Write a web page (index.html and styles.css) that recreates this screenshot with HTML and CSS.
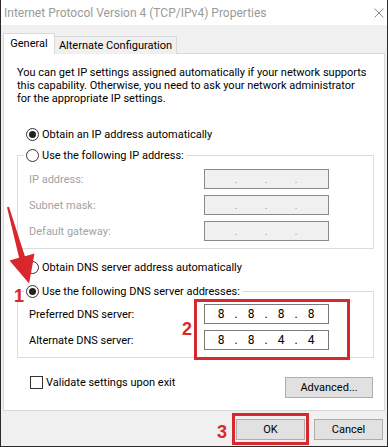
FILE: index.html
```html
<!DOCTYPE html>
<html>
<head>
<meta charset="utf-8">
<link rel="stylesheet" href="styles.css">
</head>
<body>
<div class="window">
  <div class="titlebar">
    <span class="title">Internet Protocol Version 4 (TCP/IPv4) Properties</span>
    <svg class="close" width="10" height="10" viewBox="0 0 10 10"><path d="M0.5 0.5L9.5 9.5M9.5 0.5L0.5 9.5" stroke="#8c8c8c" stroke-width="1" fill="none"/></svg>
  </div>
  <div class="client">
    <div class="tabs">
      <div class="tab active">General</div>
      <div class="tab">Alternate Configuration</div>
    </div>
    <div class="panel">
      <p class="desc">You can get IP settings assigned automatically if your network supports<br>this capability. Otherwise, you need to ask your network administrator<br>for the appropriate IP settings.</p>

      <div class="row radio-row first-radio"><span class="radio checked"></span><span>Obtain an IP address automatically</span></div>
      <div class="group group-ip">
        <div class="legend"><span class="radio"></span><span>Use the following IP address:</span></div>
        <div class="fields">
          <div class="field disabled"><span class="lbl">IP address:</span><div class="ip off"><span class="seg"></span><span class="dot">.</span><span class="seg"></span><span class="dot">.</span><span class="seg"></span><span class="dot">.</span><span class="seg"></span></div></div>
          <div class="field disabled"><span class="lbl">Subnet mask:</span><div class="ip off"><span class="seg"></span><span class="dot">.</span><span class="seg"></span><span class="dot">.</span><span class="seg"></span><span class="dot">.</span><span class="seg"></span></div></div>
          <div class="field disabled"><span class="lbl">Default gateway:</span><div class="ip off"><span class="seg"></span><span class="dot">.</span><span class="seg"></span><span class="dot">.</span><span class="seg"></span><span class="dot">.</span><span class="seg"></span></div></div>
        </div>
      </div>

      <div class="row radio-row dns-radio"><span class="radio"></span><span>Obtain DNS server address automatically</span></div>
      <div class="group group-dns">
        <div class="legend"><span class="radio checked"></span><span>Use the following DNS server addresses:</span></div>
        <div class="fields fields-dns">
          <div class="field"><span class="lbl">Preferred DNS server:</span><div class="ip"><span class="seg">8</span><span class="dot">.</span><span class="seg">8</span><span class="dot">.</span><span class="seg">8</span><span class="dot">.</span><span class="seg">8</span></div></div>
          <div class="field"><span class="lbl">Alternate DNS server:</span><div class="ip"><span class="seg">8</span><span class="dot">.</span><span class="seg">8</span><span class="dot">.</span><span class="seg">4</span><span class="dot">.</span><span class="seg">4</span></div></div>
        </div>
      </div>

      <div class="bottom-row">
        <div class="row check-row"><span class="check"></span><span>Validate settings upon exit</span></div>
        <button class="btn adv">Advanced...</button>
      </div>
    </div>
    <div class="footer">
      <button class="btn">OK</button>
      <button class="btn">Cancel</button>
    </div>
  </div>

  <svg class="arrow" width="388" height="447" viewBox="0 0 388 447">
    <polygon points="7,207.3 9,206.7 24.9,256.2 34.5,253.6 29.1,283.6 9.5,260.4 19.1,257.8" fill="#d9272e"/>
  </svg>
  <div class="mark box-dns"></div>
  <div class="mark box-ok"></div>
  <span class="num n1">1</span>
  <span class="num n2">2</span>
  <span class="num n3">3</span>
</div>
</body>
</html>
```
FILE: styles.css
```css
body {
  margin: 0;
  font-family: Roboto, "Noto Sans", sans-serif;
  font-size: 11px;
  color: #000;
  background: #fff;
}

.window {
  position: relative;
  width: 388px;
  height: 447px;
  box-sizing: border-box;
  border: 1px solid #2a2a2a;
  border-top: none;
  background: #f0f0f0;
  overflow: hidden;
}

.titlebar {
  height: 25px;
  background: #fff;
  display: flex;
  align-items: center;
  justify-content: space-between;
  padding: 0 3px 0 3px;
}

.title {
  color: #9a9a9a;
  font-size: 12px;
  white-space: nowrap;
}

.close {
  display: block;
}

.client {
  padding: 8px 2px 0 2px;
}

.tabs {
  display: flex;
  align-items: flex-end;
  height: 21px;
  margin-bottom: -1px;
}

.tab {
  box-sizing: border-box;
  height: 18px;
  border: 1px solid #d9d9d9;
  border-bottom: none;
  background: #f0f0f0;
  display: flex;
  align-items: center;
  justify-content: center;
  white-space: nowrap;
}

.tab.active {
  position: relative;
  z-index: 1;
  height: 21px;
  width: 52px;
  background: #fff;
  padding-bottom: 2px;
}

.tab:not(.active) {
  width: 123px;
  margin-left: -1px;
}

.panel {
  background: #fff;
  border: 1px solid #d9d9d9;
  padding: 12px 10px 12px 13px;
}

.desc {
  margin: 0;
  line-height: 13px;
  white-space: nowrap;
}

.row {
  display: flex;
  align-items: center;
  height: 16px;
  white-space: nowrap;
}

.radio-row {
  padding-left: 9px;
}

.first-radio {
  margin-top: 21px;
}

.dns-radio {
  margin-top: 10px;
}

.radio {
  box-sizing: border-box;
  width: 13px;
  height: 13px;
  border: 1px solid #333;
  border-radius: 50%;
  background: #fff;
  margin-right: 3px;
  display: flex;
  align-items: center;
  justify-content: center;
  flex: none;
}

.radio.checked::after {
  content: "";
  width: 7px;
  height: 7px;
  border-radius: 50%;
  background: #222;
}

.group {
  border: 1px solid #dcdcdc;
  padding: 0 0 7px 11px;
}

.group-ip {
  margin-top: 13px;
}

.group-dns {
  margin-top: 16px;
}

.legend {
  display: flex;
  width: max-content;
  align-items: center;
  height: 16px;
  margin-top: -9px;
  margin-left: -5px;
  padding: 0 2px;
  background: #fff;
  white-space: nowrap;
}

.fields {
  display: flex;
  flex-direction: column;
  gap: 6px;
  margin-top: 6px;
}

.fields-dns {
  margin-top: 5px;
}

.field {
  display: flex;
  align-items: center;
  height: 20px;
}

.field.disabled .lbl {
  color: #a3a3a3;
}

.lbl {
  width: 175px;
  flex: none;
}

.ip {
  box-sizing: border-box;
  width: 125px;
  height: 20px;
  border: 1px solid #7a7a7a;
  background: #fff;
  display: flex;
  align-items: center;
  padding-left: 2px;
  font-size: 12px;
}

.ip.off {
  background: #f0f0f0;
  border-color: #8a8a8a;
  color: #9a9a9a;
  font-size: 10px;
}

.seg {
  width: 28px;
  text-align: center;
  flex: none;
}

.dot {
  width: 2px;
  text-align: center;
  flex: none;
  display: flex;
  justify-content: center;
}

.bottom-row {
  display: flex;
  justify-content: space-between;
  align-items: flex-start;
  margin-top: 16px;
}

.check-row {
  padding-left: 13px;
}

.check {
  box-sizing: border-box;
  width: 13px;
  height: 13px;
  border: 1px solid #333;
  background: #fff;
  margin-right: 3px;
  flex: none;
}

.btn {
  box-sizing: border-box;
  height: 21px;
  border: 1px solid #adadad;
  background: #e1e1e1;
  font-family: inherit;
  font-size: 11px;
  color: #000;
  padding: 0;
  margin: 0;
}

.adv {
  width: 88px;
  margin-top: 3px;
  margin-right: 1px;
}

.footer {
  display: flex;
  justify-content: flex-end;
  gap: 9px;
  margin-top: 8px;
  padding-right: 2px;
}

.footer .btn {
  width: 69px;
}

.arrow {
  position: absolute;
  left: -1px;
  top: 0;
  pointer-events: none;
}

.mark {
  position: absolute;
  box-sizing: border-box;
  border: 3px solid #d9272e;
}

.box-dns {
  left: 193px;
  top: 299px;
  width: 156px;
  height: 61px;
}

.box-ok {
  left: 231px;
  top: 413px;
  width: 77px;
  height: 32px;
}

.num {
  position: absolute;
  font-family: "Liberation Sans", Arial, sans-serif;
  font-weight: bold;
  font-size: 18px;
  line-height: 18px;
  color: #d9272e;
}

.n1 { left: 13px; top: 287px; }
.n2 { left: 181px; top: 320px; }
.n3 { left: 216px; top: 423px; }
```
